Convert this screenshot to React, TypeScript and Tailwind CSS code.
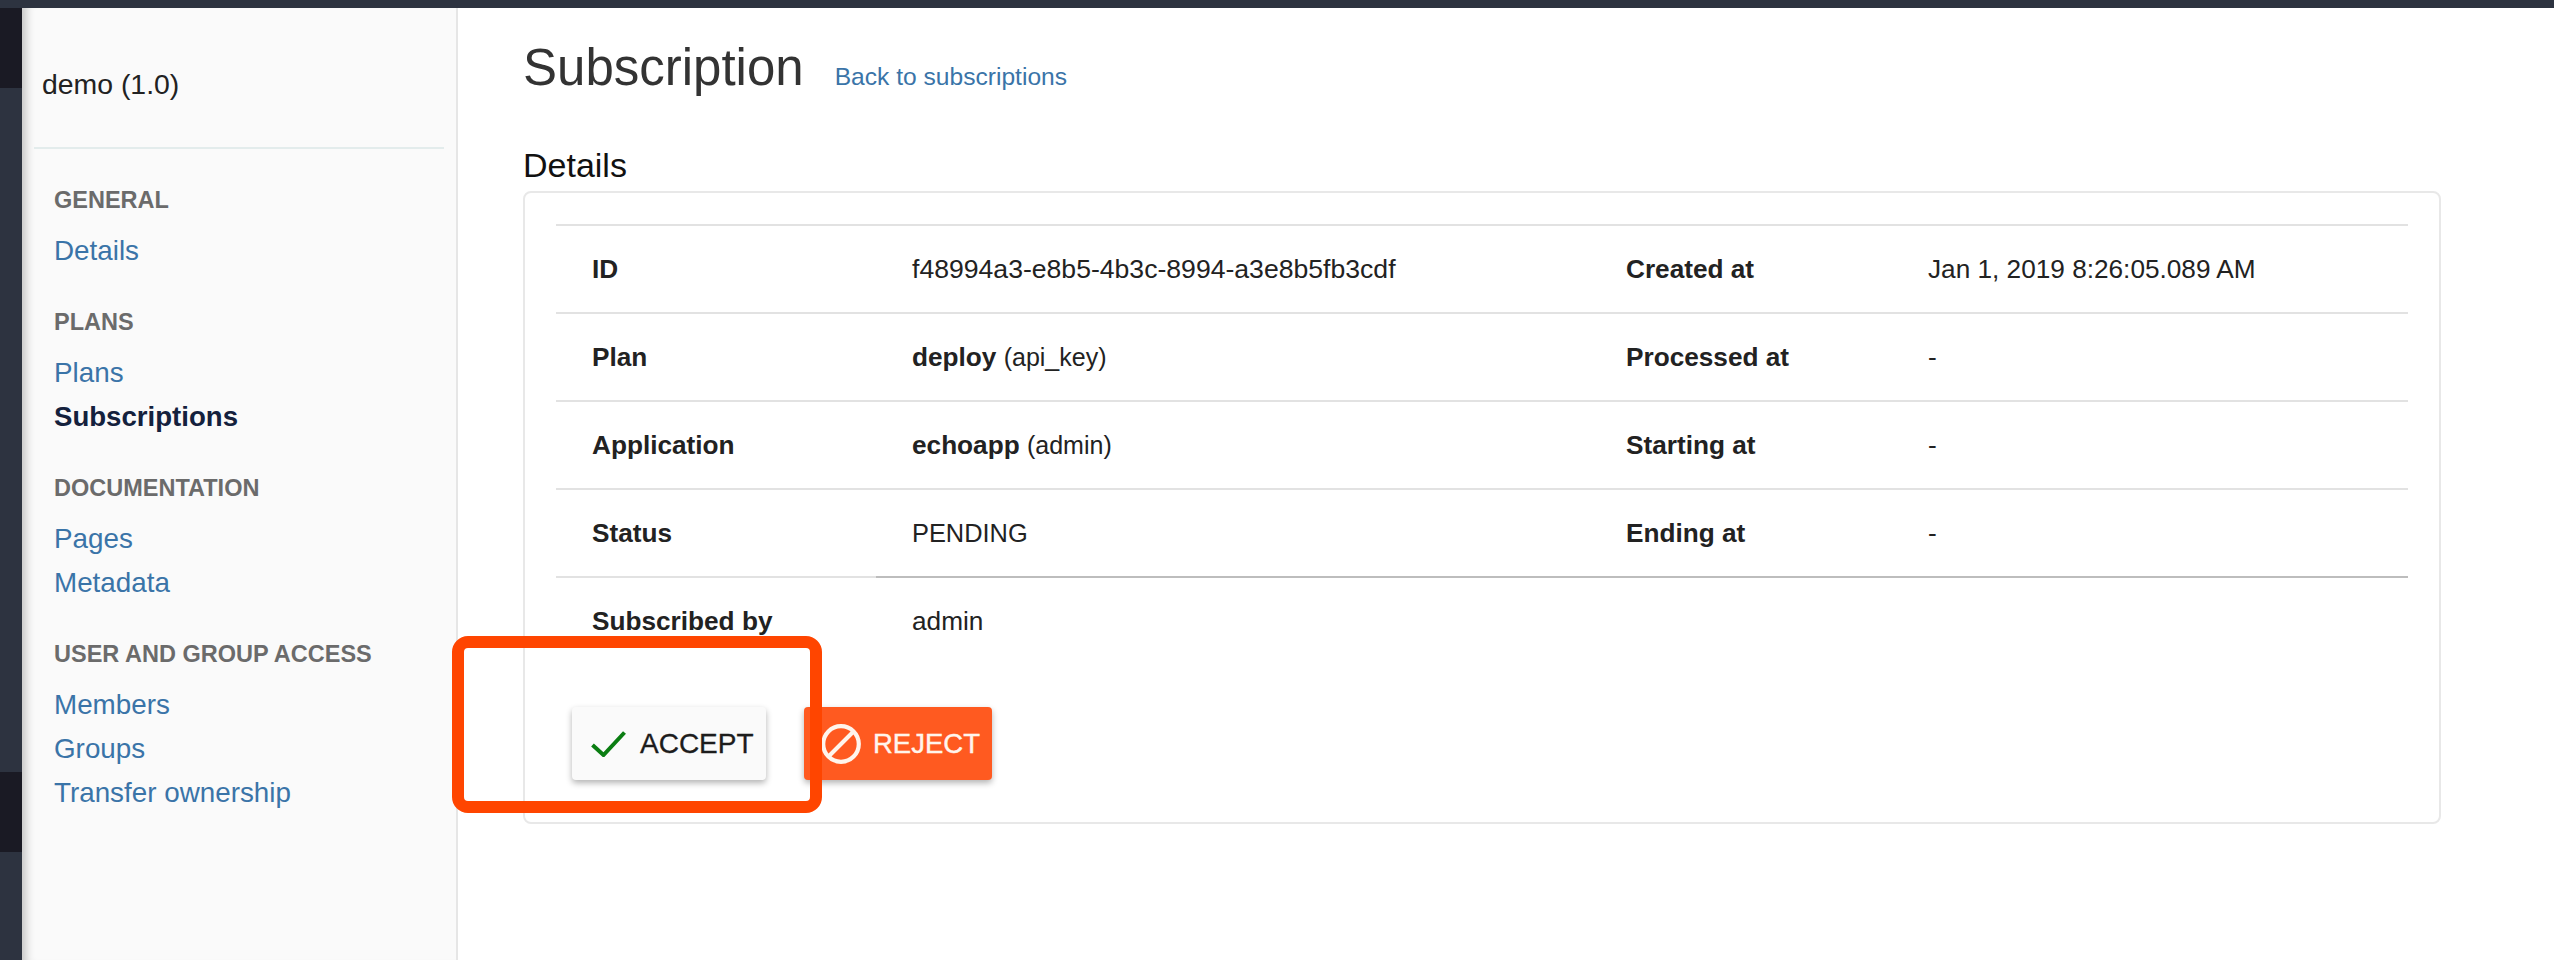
const NAV = [
  { title: 'GENERAL', links: ['Details'] },
  { title: 'PLANS', links: ['Plans', 'Subscriptions'] },
  { title: 'DOCUMENTATION', links: ['Pages', 'Metadata'] },
  { title: 'USER AND GROUP ACCESS', links: ['Members', 'Groups', 'Transfer ownership'] },
];

const ROWS = [
  { label: 'ID', value: <span className="text-[26.6px]">f48994a3-e8b5-4b3c-8994-a3e8b5fb3cdf</span>, label2: 'Created at', value2: 'Jan 1, 2019 8:26:05.089 AM' },
  { label: 'Plan', value: <><b>deploy</b> <span className="text-[25px]">(api_key)</span></>, label2: 'Processed at', value2: '-' },
  { label: 'Application', value: <><b>echoapp</b> <span className="text-[25px]">(admin)</span></>, label2: 'Starting at', value2: '-' },
  { label: 'Status', value: <span className="text-[25.4px]">PENDING</span>, label2: 'Ending at', value2: '-' },
];

function Sidebar() {
  return (
    <aside className="w-[436px] shrink-0 bg-[#fafafa] border-r-2 border-[#e6e6e6] shadow-[inset_12px_0_10px_-8px_rgba(0,0,0,0.22)]">
      <div className="pl-[20px] pt-[60px] text-[28.4px] leading-[32px] text-[#222]">demo (1.0)</div>
      <div className="mt-[47px] ml-[12px] w-[410px] h-[2px] bg-[#e3ecec]" />
      <nav className="pl-[32px] pt-[37px]">
        {NAV.map(section => (
          <div key={section.title} className="mb-[35px]">
            <div className="mb-[15px] text-[23.5px] leading-[28px] font-bold text-[#6b6b6b]">{section.title}</div>
            {section.links.map(link => (
              <a
                key={link}
                className={
                  link === 'Subscriptions'
                    ? 'block text-[27.6px] leading-[44px] font-bold text-[#14213d]'
                    : 'block text-[27.8px] leading-[44px] text-[#3a74a8]'
                }
              >
                {link}
              </a>
            ))}
          </div>
        ))}
      </nav>
    </aside>
  );
}

function Accept() {
  return (
    <button className="w-[194px] h-[73px] flex items-center pl-[19px] rounded-[4px] bg-[#fafafa] text-[28px] text-[#1c1c1c] [-webkit-text-stroke:0.3px_#1c1c1c] shadow-[0_3px_6px_rgba(0,0,0,0.3)]">
      <svg width="35" height="26" viewBox="0 0 35 26" fill="none" className="shrink-0">
        <path d="M1.5 14L12.5 24L33.5 1.5" stroke="#0a7d12" strokeWidth="4" />
      </svg>
      <span className="ml-[14px]">ACCEPT</span>
    </button>
  );
}

function Reject() {
  return (
    <button className="w-[188px] h-[73px] flex items-center pl-[17px] rounded-[4px] bg-[#ff5a20] text-[27.5px] text-[#fff5ec] [-webkit-text-stroke:0.4px_#fff5ec] shadow-[0_3px_6px_rgba(0,0,0,0.3)]">
      <svg width="40" height="40" viewBox="0 0 40 40" fill="none" className="shrink-0">
        <circle cx="20" cy="20" r="17.8" stroke="#fff5ec" strokeWidth="4.2" />
        <path d="M7.5 32.5L32.5 7.5" stroke="#fff5ec" strokeWidth="4" />
      </svg>
      <span className="ml-[12px]">REJECT</span>
    </button>
  );
}

export default function App() {
  return (
    <div className="relative h-[960px] w-[2554px] overflow-hidden bg-white font-['Liberation_Sans',Arial,sans-serif]">
      <div className="h-[8px] bg-[#2d3340]" />
      <div className="flex h-[952px]">
        <div className="w-[22px] shrink-0 bg-[#2d3340]">
          <div className="h-[80px] bg-[#1a1a24]" />
          <div className="mt-[684px] h-[80px] bg-[#1a1a24]" />
        </div>
        <Sidebar />
        <main className="flex-1 pl-[65px] pt-[30px]">
          <div className="flex items-baseline gap-[31px]">
            <h1 className="text-[51px] leading-[60px] text-[#333]">Subscription</h1>
            <a className="text-[24.6px] text-[#3a74a8]">Back to subscriptions</a>
          </div>
          <h2 className="mt-[47px] text-[34px] leading-[40px] text-[#111]">Details</h2>
          <section className="mt-[6px] w-[1918px] h-[633px] border-2 border-[#e8e8e8] rounded-[8px] px-[31px] pt-[31px] text-[26.2px] text-[#222]">
            {ROWS.map(row => (
              <div key={row.label} className="grid grid-cols-[356px_714px_302px_1fr] h-[88px] pt-[2px] items-center border-t-2 border-[#e2e2e2]">
                <div className="pl-[36px] font-bold">{row.label}</div>
                <div>{row.value}</div>
                <div className="font-bold">{row.label2}</div>
                <div>{row.value2}</div>
              </div>
            ))}
            <div className="flex h-[2px]">
              <div className="w-[320px] bg-[#e2e2e2]" />
              <div className="flex-1 bg-[#bdbdbd]" />
            </div>
            <div className="grid grid-cols-[356px_1fr] h-[86px] pt-[2px] items-center">
              <div className="pl-[36px] font-bold">Subscribed by</div>
              <div>admin</div>
            </div>
            <div className="mt-[43px] ml-[16px] flex gap-[38px]">
              <Accept />
              <Reject />
            </div>
          </section>
        </main>
      </div>
      {/* annotation drawn on top of the screenshot */}
      <div className="absolute left-[452px] top-[636px] w-[370px] h-[177px] border-[12px] border-[#ff4500] rounded-[16px]" />
    </div>
  );
}
